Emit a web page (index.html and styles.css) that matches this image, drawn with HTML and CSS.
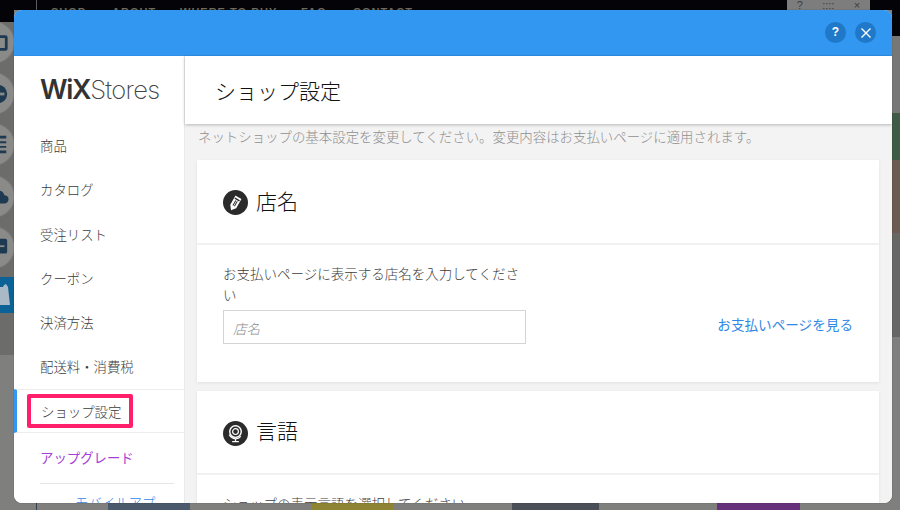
FILE: index.html
```html
<!DOCTYPE html>
<html lang="ja">
<head>
<meta charset="utf-8">
<title>ショップ設定</title>
<link rel="stylesheet" href="styles.css">
</head>
<body>
<div class="stage">
  <div class="backdrop-left"></div>
  <div class="site-nav"><span>SHOP</span><span>ABOUT</span><span>WHERE TO BUY</span><span>FAQ</span><span>CONTACT</span></div>
  <div class="site-rule"></div>
  <div class="site-widget"><span>?</span><span>::::</span><span>×</span></div>
  <div class="tool tool-1"><svg viewBox="0 0 24 24" class="tool-icon"><rect x="3" y="5" width="18" height="14" rx="1" fill="none" stroke="#1e3a52" stroke-width="3"/></svg></div>
  <div class="tool tool-2"><svg viewBox="0 0 24 24" class="tool-icon"><circle cx="12" cy="12" r="10" fill="#1e3a52"/><rect x="5" y="10.500" width="14" height="3" fill="#8a8a88"/></svg></div>
  <div class="tool tool-3"><svg viewBox="0 0 24 24" class="tool-icon"><path d="M3 2h18v3H3zM3 8h18v2H3zM3 13h3v8H3zM9 13h12v2H9zM9 18h12v3H9z" fill="#1e3a52"/></svg></div>
  <div class="tool tool-4"><svg viewBox="0 0 24 24" class="tool-icon"><path d="M6 19a5 5 0 0 1 0-10 7 7 0 0 1 13 1 4.500 4.500 0 0 1 0 9z" fill="#1e3a52"/><path d="M9 13h4l-2-3z" fill="#8a8a88"/></svg></div>
  <div class="tool tool-5"><svg viewBox="0 0 24 24" class="tool-icon"><path d="M4 2h16a2 2 0 0 1 2 2v12a2 2 0 0 1-2 2h-7l-5 5v-5H4a2 2 0 0 1-2-2V4a2 2 0 0 1 2-2z" fill="#1e3a52"/><path d="M5 9h14v2H5z" fill="#8a8a88"/></svg></div>
  <div class="blue-tab"><svg viewBox="0 0 14 36" class="bag-icon"><path d="M0 10h3a4 4 0 0 1 3-3l2 3 2 18H0z" fill="#a9bac6"/></svg></div>
  <div class="strip strip-line"></div>
  <div class="strip strip-a"></div>
  <div class="strip strip-b"></div>
  <div class="strip strip-c"></div>
  <div class="strip strip-d"></div>
  <div class="side-right"></div>

  <div class="modal">
    <header class="modal-bar">
      <button class="round-btn" type="button">?</button>
      <button class="round-btn" type="button">
        <svg viewBox="0 0 12 12" class="close-icon"><path d="M1.500 1.500l9 9M10.500 1.500l-9 9" stroke="#fff" stroke-width="1.400" fill="none"/></svg>
      </button>
    </header>
    <div class="modal-body">
      <nav class="sidebar">
        <div class="logo"><span class="logo-wix">WiX</span><span class="logo-stores">Stores</span></div>
        <ul class="menu">
          <li class="menu-item">商品</li>
          <li class="menu-item">カタログ</li>
          <li class="menu-item">受注リスト</li>
          <li class="menu-item">クーポン</li>
          <li class="menu-item">決済方法</li>
          <li class="menu-item">配送料・消費税</li>
          <li class="menu-item menu-active"><span class="highlight">ショップ設定</span></li>
          <li class="menu-item menu-upgrade">アップグレード</li>
        </ul>
        <div class="mobile-link">モバイルアプ</div>
      </nav>
      <main class="main">
        <div class="page-title"><h1>ショップ設定</h1></div>
        <div class="scroller">
          <p class="intro">ネットショップの基本設定を変更してください。変更内容はお支払いページに適用されます。</p>
          <section class="card card-name">
            <div class="card-head">
              <span class="badge">
                <svg viewBox="0 0 26 26" class="badge-icon"><g transform="rotate(30 13 13)" fill="none" stroke="#fff" stroke-width="1.500"><path d="M10.200 7.500h5.600v10L13 21l-2.800-3.500z" fill="#fff"/><path d="M10.200 9.500h5.600" stroke="#2b2b2b"/><path d="M12.200 11v6" stroke="#2b2b2b" stroke-width="1"/><path d="M14 11v6" stroke="#2b2b2b" stroke-width="1"/></g></svg>
              </span>
              <h2>店名</h2>
            </div>
            <div class="card-content name-content">
              <div class="field">
                <label class="field-label">お支払いページに表示する店名を入力してください</label>
                <div class="input">店名</div>
              </div>
              <a class="preview-link">お支払いページを見る</a>
            </div>
          </section>
          <section class="card card-lang">
            <div class="card-head">
              <span class="badge">
                <svg viewBox="0 0 26 26" class="badge-icon" fill="none" stroke="#fff"><circle cx="13" cy="11" r="6" stroke-width="1.500"/><circle cx="13" cy="11" r="3" stroke-width="1.200"/><path d="M6.500 14a8 8 0 0 0 6.500 4.500 7 7 0 0 0 5.500-2.500M13 18.500v2.500M9.500 21.500h7" stroke-width="1.300"/></svg>
              </span>
              <h2>言語</h2>
            </div>
            <div class="card-content">
              <p class="field-label">ショップの表示言語を選択してください</p>
            </div>
          </section>
        </div>
      </main>
    </div>
  </div>
</div>
</body>
</html>
```
FILE: styles.css
```css
* { box-sizing: border-box; }
html, body { margin: 0; padding: 0; }
body { font-family: "Noto Sans CJK JP", "Noto Sans", sans-serif; font-weight: 300; }
.stage { position: relative; width: 900px; height: 510px; overflow: hidden; background: #7f7f7e; }

/* dimmed site behind the dialog */
.backdrop-left { position: absolute; left: 0; top: 0; width: 14px; height: 355px; background: linear-gradient(#040408 0 22px, #6c6c6a 22px); }
.site-nav { position: absolute; left: 0; top: 0; width: 900px; height: 10px; background: #040408; color: #6e6a5c; font: 700 11px/1 "Liberation Sans", sans-serif; letter-spacing: 1px; white-space: nowrap; overflow: hidden; }
.site-nav span { position: absolute; top: 7px; }
.site-nav span:nth-child(1) { left: 51px; }
.site-nav span:nth-child(2) { left: 112px; }
.site-nav span:nth-child(3) { left: 180px; }
.site-nav span:nth-child(4) { left: 301px; }
.site-nav span:nth-child(5) { left: 353px; }
.site-rule { position: absolute; left: 36px; top: 0; width: 1px; height: 10px; background: #5c5c5c; }
.site-widget { position: absolute; left: 787px; top: 0; width: 83px; height: 10px; background: #7d7d7d; color: #3c3c3c; font: 11px/10px "Liberation Sans", sans-serif; display: flex; justify-content: space-around; overflow: hidden; }
.tool { position: absolute; left: -27px; width: 41px; height: 41px; border-radius: 50%; background: #8a8a88; box-shadow: 0 0 0 1px #777; display: flex; align-items: center; justify-content: flex-end; }
.tool-icon { width: 22px; height: 22px; flex: none; transform: translateX(-5px); }
.tool-1 { top: 22px; }
.tool-2 { top: 73px; }
.tool-3 { top: 124px; }
.tool-4 { top: 176px; }
.tool-5 { top: 227px; }
.blue-tab { position: absolute; left: 0; top: 277px; width: 14px; height: 36px; background: #0a6296; }
.bag-icon { display: block; width: 14px; height: 36px; }
.strip { position: absolute; top: 503px; height: 7px; }
.strip-line { left: 36px; width: 1px; background: #33414f; }
.strip-a { left: 108px; width: 82px; background: #4a5a6c; }
.strip-b { left: 311px; width: 83px; background: #8f8434; }
.strip-c { left: 512px; width: 87px; background: #4b4f58; }
.strip-d { left: 717px; width: 83px; background: #67307b; }
.side-right { position: absolute; left: 892px; top: 10px; width: 8px; height: 327px; background: linear-gradient(#040408 0 26px, #777775 26px 103px, #3f5a45 103px 150px, #6d5a52 150px 223px, #666664 223px); }

/* dialog */
.modal { position: absolute; left: 14px; top: 10px; width: 878px; height: 493px; border-radius: 8px; overflow: hidden; background: #fff; display: flex; flex-direction: column; box-shadow: 0 0 1px rgba(0,0,0,.6); }
.modal-bar { flex: none; height: 46px; background: #3297f0; border-bottom: 1px solid #2f8fe6; display: flex; justify-content: flex-end; align-items: center; gap: 9px; padding: 0 16px 0 0; }
.round-btn { width: 21px; height: 21px; border: 0; border-radius: 50%; padding: 0; background: #1f78c8; color: #fff; font: 700 12px/21px "Liberation Sans", sans-serif; display: flex; align-items: center; justify-content: center; }
.close-icon { width: 12px; height: 12px; }
.modal-body { flex: 1; min-height: 0; display: flex; }

.sidebar { flex: none; width: 171px; border-right: 1px solid #e9e9e9; background: #fff; overflow: hidden; }
.logo { height: 67px; padding: 17px 0 0 26px; white-space: nowrap; display: flex; align-items: baseline; }
.logo-wix { font: 600 27px/34px "Inter", sans-serif; letter-spacing: -1.300px; color: #333; }
.logo-stores { font: 200 25.500px/34px "Inter", sans-serif; letter-spacing: -.700px; color: #444; margin-left: 0; }
.menu { list-style: none; margin: 0; padding: 0; }
.menu-item { height: 44.300px; line-height: 44.300px; padding-left: 26px; font-size: 13.400px; color: #3c3c3c; white-space: nowrap; }
.menu-active { position: relative; border-top: 1px solid #ededed; border-bottom: 1px solid #ededed; border-left: 3px solid #3297f0; padding-left: 23px; line-height: 42px; }
.highlight { position: absolute; left: 10px; top: 4px; width: 106px; height: 34px; border: 4px solid #ff1f6a; border-radius: 2px; padding-left: 10px; line-height: 26px; color: #3c3c3c; }
.menu-upgrade { color: #a53fd6; height: 50px; line-height: 48px; font-weight: 400; }
.mobile-link { margin: 0 10px 0 26px; border-top: 1px solid #e6e6e6; padding: 8px 0 0 35px; font-size: 13.400px; line-height: 20px; color: #2f88e6; white-space: nowrap; }

.main { flex: 1; min-width: 0; background: #f3f3f3; display: flex; flex-direction: column; }
.page-title { flex: none; height: 68px; background: #fff; padding: 0 0 0 30px; box-shadow: 0 1px 3px rgba(0,0,0,.25); position: relative; }
h1 { margin: 0; font-size: 21px; font-weight: 300; line-height: 69px; color: #111; }
.scroller { flex: 1; min-height: 0; overflow: hidden; padding: 0 13px 0 12px; }
.intro { margin: 0 0 0 1px; height: 36px; font-size: 13.430px; line-height: 25px; color: #8f8f8f; white-space: nowrap; }
.card { background: #fff; box-shadow: 0 1px 3px rgba(0,0,0,.08); }
.card-name { height: 222px; margin-bottom: 9px; }
.card-lang { height: 200px; }
.card-head { height: 85px; border-bottom: 2px solid #f1f1f1; padding-left: 26px; display: flex; align-items: center; gap: 8px; }
.card-lang .card-head { height: 84px; }
.badge { width: 25px; height: 25px; border-radius: 50%; background: #2b2b2b; display: flex; align-items: center; justify-content: center; flex: none; margin-top: 2px; }
.badge-icon { width: 25px; height: 25px; }
h2 { margin: 0 0 4px; font-size: 21px; font-weight: 300; line-height: 30px; color: #111; }
.card-content { padding: 18px 26px 0; }
.name-content { display: flex; justify-content: space-between; padding-right: 26px; }
.field { width: 303px; }
.field-label { display: block; margin: 0; font-size: 13.500px; line-height: 21px; color: #3c3c3c; }
.input { width: 303px; height: 34px; margin-top: 5px; border: 1px solid #d4d4d4; padding-left: 9px; font-size: 13.500px; line-height: 34px; font-style: italic; color: #8a8a8a; }
.preview-link { margin-top: 49px; font-size: 13.600px; line-height: 24px; font-weight: 400; color: #2f88e6; white-space: nowrap; }
```
